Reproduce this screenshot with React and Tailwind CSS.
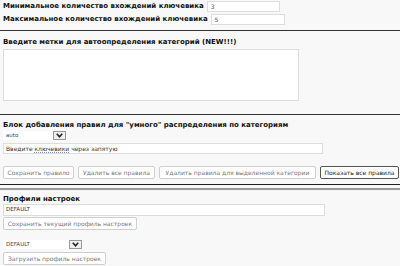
import React from "react";

const Btn = ({ children, w, dark }) => (
  <div
    className={`h-[13px] ${w} flex items-center justify-center whitespace-nowrap rounded-[2px] border bg-white text-[6px] leading-none ${
      dark ? "border-[#555] text-[#222]" : "border-[#cfcfcf] text-[#777]"
    }`}
  >
    {children}
  </div>
);

const Sel = ({ text, w }) => (
  <div className={`flex h-[9px] ${w} items-center bg-white`}>
    <div className="flex-1 pl-[3px] text-[5.5px] leading-none text-[#444]">{text}</div>
    <div className="flex h-[9px] w-[13px] items-center justify-center border border-[#999] bg-[#eee]">
      <svg width="7" height="5" viewBox="0 0 7 5">
        <path d="M0.8 0.8 L3.5 3.8 L6.2 0.8" fill="none" stroke="#222" strokeWidth="1.6" />
      </svg>
    </div>
  </div>
);

export default function App() {
  return (
    <div className="h-[266px] w-[400px] overflow-hidden bg-[#f8f8f8] font-['DejaVu_Sans',sans-serif] text-[#111]">
      <div className="flex h-[12px] items-center pl-[3px] pt-[1px]">
        <span className="whitespace-nowrap text-[7px] font-bold leading-none">Минимальное количество вхождений ключевика</span>
        <div className="ml-[3px] flex h-[11px] w-[73px] items-center border border-[#ddd] bg-white pl-[3px] text-[6px] text-[#555]">3</div>
      </div>
      <div className="mt-[1px] flex h-[12px] items-center pl-[3px]">
        <span className="whitespace-nowrap text-[7px] font-bold leading-none">Максимальное количество вхождений ключевика</span>
        <div className="ml-[3px] flex h-[11px] w-[74px] items-center border border-[#ddd] bg-white pl-[3px] text-[6px] text-[#555]">5</div>
      </div>
      <div className="mt-[5px] h-[1px] bg-[#333]" />
      <div className="mt-[7px] whitespace-nowrap pl-[3px] text-[7px] font-bold leading-[8px]">
        Введите метки для автоопределения категорий (NEW!!!)
      </div>
      <div className="ml-[3px] mt-[3px] h-[52px] w-[296px] border border-[#ddd] bg-white" />
      <div className="mt-[13px] h-[1px] bg-[#333]" />
      <div className="mt-[6px] whitespace-nowrap pl-[3px] text-[7px] font-bold leading-[8px]">
        Блок добавления правил для "умного" распределения по категориям
      </div>
      <div className="ml-[3px] mt-[2px]">
        <Sel text="auto" w="w-[63px]" />
      </div>
      <div className="ml-[3px] mt-[3px] flex h-[11px] w-[320px] items-center whitespace-nowrap border border-[#ddd] bg-white pl-[2px] text-[6px] leading-none text-[#333]">
        Введите&nbsp;<span className="underline decoration-[#7a8cc0] decoration-dotted">ключевики</span>&nbsp;через запятую
      </div>
      <div className="mt-[12px] flex gap-[4px] pl-[3px]">
        <Btn w="w-[71px]">Сохранить правило</Btn>
        <Btn w="w-[77px]">Удалить все правила</Btn>
        <Btn w="w-[157px]">Удалить правила для выделенной категории</Btn>
        <Btn w="w-[79px]" dark>Показать все правила</Btn>
      </div>
      <div className="mt-[5px] h-[1px] bg-[#222]" />
      <div className="mt-[3px] h-[2px] bg-[#999]" />
      <div className="mt-[5px] pl-[3px] text-[7px] font-bold leading-[8px]">Профили настроек</div>
      <div className="ml-[3px] mt-[1px] flex h-[12px] w-[322px] items-center border border-[#ddd] bg-white pl-[2px] text-[5.5px] leading-none text-[#333]">
        DEFAULT
      </div>
      <div className="ml-[3px] mt-[1px]">
        <Btn w="w-[134px]">Сохранить текущий профиль настроек</Btn>
      </div>
      <div className="ml-[3px] mt-[10px]">
        <Sel text="DEFAULT" w="w-[79px]" />
      </div>
      <div className="ml-[3px] mt-[3px]">
        <Btn w="w-[103px]">Загрузить профиль настроек</Btn>
      </div>
    </div>
  );
}
